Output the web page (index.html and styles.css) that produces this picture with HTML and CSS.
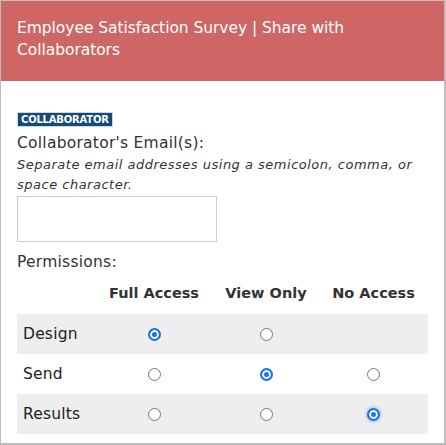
FILE: index.html
```html
<!DOCTYPE html>
<html>
<head>
<meta charset="utf-8">
<link rel="stylesheet" href="styles.css">
</head>
<body>
<div class="frame">
  <header class="head">
    <h1 class="title">Employee Satisfaction Survey | Share with Collaborators</h1>
  </header>
  <main class="content">
    <span class="badge">COLLABORATOR</span>
    <div class="label">Collaborator's Email(s):</div>
    <div class="hint">Separate email addresses using a semicolon, comma, or space character.</div>
    <div class="input"></div>
    <div class="label perm-label">Permissions:</div>
    <div class="grid">
      <div class="row hdr">
        <div class="cell name"></div>
        <div class="cell">Full Access</div>
        <div class="cell">View Only</div>
        <div class="cell">No Access</div>
      </div>
      <div class="row shade">
        <div class="cell name">Design</div>
        <div class="cell"><span class="radio on"></span></div>
        <div class="cell"><span class="radio"></span></div>
        <div class="cell"></div>
      </div>
      <div class="row">
        <div class="cell name">Send</div>
        <div class="cell"><span class="radio"></span></div>
        <div class="cell"><span class="radio on"></span></div>
        <div class="cell"><span class="radio"></span></div>
      </div>
      <div class="row shade">
        <div class="cell name">Results</div>
        <div class="cell"><span class="radio"></span></div>
        <div class="cell"><span class="radio"></span></div>
        <div class="cell"><span class="radio on focus"></span></div>
      </div>
    </div>
  </main>
</div>
</body>
</html>
```
FILE: styles.css
```css
* { box-sizing: border-box; }
html, body { margin: 0; padding: 0; background: #fff; }
body { font-family: "DejaVu Sans", "Noto Sans", sans-serif; color: #333; }
.frame {
  width: 446px;
  height: 445px;
  border: 1px solid #bdbdbd;
  border-right-width: 2px;
  border-bottom-width: 2px;
  overflow: hidden;
}
.head {
  background: #cd6664;
  height: 80px;
  padding: 16px 16px 0 16px;
}
.title {
  margin: 0;
  font-weight: normal;
  font-size: 15.5px;
  line-height: 22px;
  color: #fff;
  letter-spacing: -0.05px;
}
.content { padding: 31px 16px 0 16px; }
.badge {
  display: block;
  width: max-content;
  background: #144a7a;
  color: #fff;
  font-size: 10px;
  font-weight: bold;
  line-height: 13px;
  padding: 0 3px;
  border: 1px solid #cfd6dd;
  letter-spacing: -0.2px;
}
.label {
  font-size: 15.5px;
  line-height: 20px;
  margin-top: 6px;
  color: #333;
  letter-spacing: 0.25px;
}
.hint {
  font-style: italic;
  font-size: 13px;
  line-height: 20px;
  color: #333;
  margin-top: 2px;
  letter-spacing: 0.5px;
}
.input {
  width: 200px;
  height: 46px;
  border: 1px solid #ccc;
  margin-top: 1px;
}
.perm-label { margin-top: 10px; }
.grid { width: 411px; }
.row {
  display: grid;
  grid-template-columns: 78px 118px 106px 109px;
  height: 40px;
  align-items: center;
}
.row.hdr { height: 42px; }
.row.shade { background: #eeeeee; }
.cell { text-align: center; display: flex; justify-content: center; align-items: center; }
.cell.name { justify-content: flex-start; padding-left: 6px; font-size: 15.5px; color: #222; letter-spacing: 0.2px; }
.hdr .cell { font-weight: bold; font-size: 14.5px; color: #333; }
.radio {
  width: 13px;
  height: 13px;
  border-radius: 50%;
  border: 1px solid #767676;
  background: #fff;
  display: inline-block;
}
.radio.on {
  border: 2px solid #1a73e8;
  background: #1a73e8;
  box-shadow: inset 0 0 0 2px #fff;
}
.radio.focus { box-shadow: inset 0 0 0 2px #fff, 0 0 3px 1px rgba(26,115,232,0.35); }
```
